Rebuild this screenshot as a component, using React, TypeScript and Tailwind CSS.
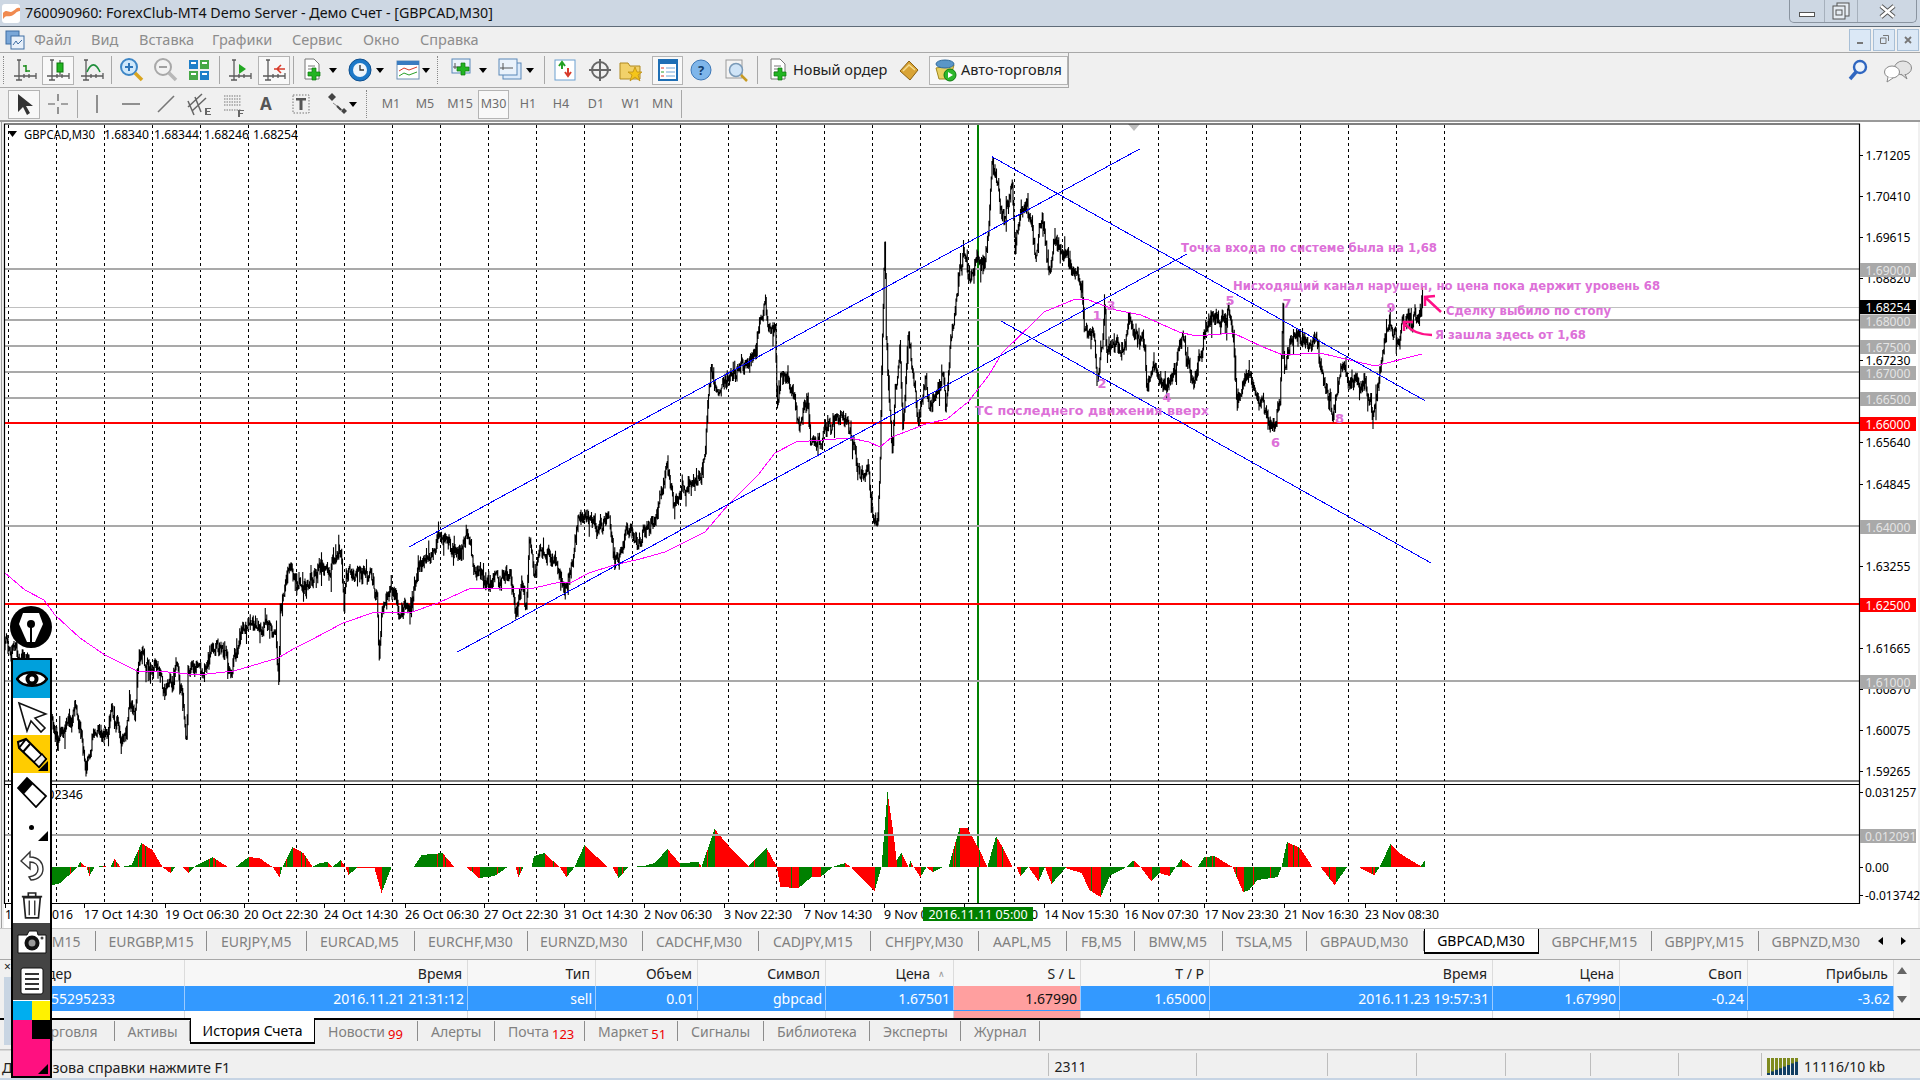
import React from "react";

type P = [number, number];
let seed = 12345;
const rnd = () => {
  seed = (seed * 1664525 + 1013904223) % 4294967296;
  return seed / 4294967296;
};
const interp = (pts: P[], x: number) => {
  for (let i = 1; i < pts.length; i++) {
    if (x <= pts[i][0]) {
      const [a, b] = pts[i - 1];
      const [c, d] = pts[i];
      return c === a ? d : b + ((d - b) * (x - a)) / (c - a);
    }
  }
  return pts[pts.length - 1][1];
};

const PRICE: P[] = [[5,647],[19,653],[30,665],[55,727],[57,747],[67,725],[76,707],[86,763],[95,728],[105,738],[111.5,713],[126,738],[130,700],[135,717],[139,647],[145,667],[158,670],[162,687],[172.5,687],[175.5,663],[181,693],[187,740],[188,670],[202,670],[210,653],[223,647],[231,670],[242,633],[248,625],[269,627],[276,640],[279,680],[280,607],[288,572],[295,577],[307,587],[320,567],[330,570],[341,547],[344,610],[346,570],[370,577],[377,600],[379,667],[382,613],[389,590],[400,607],[412,607],[417,573],[427,560],[438,540],[446,543],[461,553],[468,533],[473.5,563],[484,583],[501,580],[510,573],[515.6,617],[522,580],[526,610],[529,543],[534.5,573],[541,547],[555.6,563],[564,592],[572,567],[579,517],[589,520],[602,525],[608,513],[614.5,563],[627,533],[640,540],[657,517],[667,467],[674,503],[690.5,477],[699,483],[705,463],[707,413],[711.5,363],[716,393],[728,380],[741,367],[756,357],[758,333],[765,297],[768,330],[775.5,337],[777,400],[781,367],[791.5,393],[800,427],[808,400],[810.5,437],[821,440],[831.5,425],[844,413],[850,433],[861,480],[867,463],[871.5,510],[878,525],[880,470],[882,357],[885,237],[886,333],[892.5,463],[895,397],[900,353],[903,423],[908.5,333],[918,417],[926,380],[930,410],[943,377],[946,413],[951,337],[958,287],[964,253],[970,277],[977,260],[985,263],[989,220],[992,157],[998,190],[1004,220],[1012.5,183],[1015,250],[1019,220],[1027,200],[1035.6,257],[1042,213],[1049,277],[1054.6,240],[1065,250],[1073.5,267],[1082,287],[1084,327],[1094.5,333],[1097,380],[1103,340],[1105,300],[1106,347],[1124,350],[1129.5,320],[1145,343],[1147,387],[1155.6,363],[1166,387],[1174.5,373],[1181,337],[1193.5,383],[1204,333],[1210,317],[1227,320],[1228,302],[1232.6,323],[1237,407],[1250,377],[1258.7,407],[1273,420],[1274.7,433],[1280,397],[1283,307],[1284,370],[1292,337],[1309,343],[1317,340],[1322,370],[1327.5,397],[1332.7,420],[1340.6,367],[1351,383],[1367,387],[1373,412],[1380,377],[1385,333],[1389,318],[1397,343],[1403,323],[1414,317],[1420,320],[1423,295]];

const MA: P[] = [[5,573],[25,590],[44,600],[55,615],[80,638],[105,655],[137,671],[168,672],[198,675],[234,671],[278,658],[295,648],[311,640],[343,623],[375,612],[387,613],[412,612],[438,603],[471,588],[534,588],[560,582],[572,582],[589,573],[614,565],[640,559],[665,552],[705,532],[728,505],[758,475],[775,453],[796,442],[850,438],[869,442],[880,447],[892,437],[926,424],[947,419],[968,402],[989,375],[1002,353],[1036,320],[1044,312],[1073,300],[1086,299],[1116,310],[1141,315],[1179,332],[1196,336],[1233,333],[1263,347],[1283,355],[1320,353],[1375,366],[1422,354]];

const HIST: P[] = [[52,885],[60,883],[77,867],[79.5,862],[86,867],[89,876],[94,867],[102,866],[110,867],[114,859],[120,867],[131,865],[141,843],[152,850],[162,867],[170,873],[175,867],[182,867],[188,873],[196,865],[212,857],[227.5,867],[235,867],[248,857],[259,858],[272,867],[279,877],[282,867],[292,847],[303,853],[312,867],[319,863],[327,862],[332,867],[340,860],[345,867],[348,875],[356,868],[374,868],[381,893],[391,867],[413,867],[421,855],[442,853],[454,867],[466,867],[478.5,878],[494,876],[507,867],[515,867],[518,877],[523,867],[531,867],[533.5,856],[544,853],[559,867],[566,877],[574,867],[584,845],[607,867],[612,867],[618,878],[628,867],[643,866],[654,863],[667,849],[679,863],[698,862],[701,867],[714,829],[730,848],[748,866],[766,848],[776,866],[780,887],[798,888],[811,877],[820,877],[832,867],[844.5,863],[850.6,867],[861,878],[874,891],[881,867],[887,792],[893.5,837],[896,860],[901,853],[908,867],[910,861],[913,867],[920,877],[926,867],[932,872],[942.5,867],[948,867],[959,828],[967,828],[979,850],[987,867],[995.5,836],[1003.7,850],[1012,867],[1016,867],[1020,876],[1028,867],[1038,881],[1044.5,867],[1051,884],[1065,868],[1081,873],[1089,890],[1100,897],[1110,875],[1126,867],[1133.5,860],[1140,867],[1150.6,881],[1159,873],[1169,876],[1181,859],[1192,867],[1197,867],[1204,857],[1214,856],[1232,867],[1242.5,892],[1248.6,890],[1257,880],[1277,877],[1281,867],[1286.5,842],[1299.6,848],[1312,867],[1320,867],[1334,885],[1346.5,867],[1350,867],[1358,867],[1374,875],[1379,867],[1390,844],[1401.6,855],[1420,866],[1424,861]];

const buildPrice = () => {
  let d = "";
  let prev = PRICE[0][1];
  let n = 0;
  for (let x = 5; x <= 1423; x += 0.75) {
    n = 0.55 * n + (rnd() - 0.5) * 13;
    const base = interp(PRICE, x);
    const m = base + n;
    const hi = Math.max(157, Math.min(m, prev) - rnd() * 5 - (rnd() < 0.1 ? rnd() * 12 : 0));
    const lo = Math.max(m, prev) + rnd() * 5 + (rnd() < 0.1 ? rnd() * 12 : 0);
    d += `M${x.toFixed(2)} ${hi.toFixed(1)}V${lo.toFixed(1)}`;
    prev = m;
  }
  return d;
};
const priceD = buildPrice();
const maD = "M" + MA.map((p) => p.join(" ")).join("L");

const buildHist = () => {
  let g = "";
  let r = "";
  let prev = interp(HIST, 52);
  for (let x = 52; x <= 1424; x++) {
    const y = interp(HIST, x);
    let green = y < prev;
    if (Math.abs(y - 867) > 5 && rnd() < 0.06) green = !green;
    const seg = `M${x}.5 867V${y.toFixed(1)}`;
    if (Math.abs(y - 867) > 0.5) {
      if (green) g += seg;
      else r += seg;
    }
    prev = y;
  }
  return { g, r };
};
const hist = buildHist();

const GRID = [8,56,104,152,200,248,296,344,392,440,488,536,584,632,680,728,776,824,872,920,968,1014,1062,1110,1158,1206,1252,1300,1348,1396,1444];
const AXIS: [string, number][] = [["1.71205",155],["1.70410",196],["1.69615",237],["1.68820",278],["1.67230",360],["1.65640",442],["1.64845",484],["1.63255",566],["1.61665",648],["1.60870",689],["1.60075",730],["1.59265",771]];
const TAGS: [string, number, string][] = [["1.69000",270,"#a9a9a9"],["1.68000",321.5,"#a9a9a9"],["1.67500",347,"#a9a9a9"],["1.67000",373,"#a9a9a9"],["1.66500",399,"#a9a9a9"],["1.66000",424,"#ff0000"],["1.64000",527,"#a9a9a9"],["1.62500",605,"#ff0000"],["1.61000",682,"#a9a9a9"],["1.68254",307,"#000000"]];
const TIMES: [string, number][] = [["14 Oct 2016",5],["17 Oct 14:30",84],["19 Oct 06:30",165],["20 Oct 22:30",244],["24 Oct 14:30",324],["26 Oct 06:30",405],["27 Oct 22:30",484],["31 Oct 14:30",564],["2 Nov 06:30",644],["3 Nov 22:30",724],["7 Nov 14:30",804],["9 Nov 06:30",884],["11 Nov 00:30",964],["14 Nov 15:30",1044.5],["16 Nov 07:30",1124.5],["17 Nov 23:30",1204.5],["21 Nov 16:30",1284.5],["23 Nov 08:30",1365]];
const NOTES: [string, number, number, number][] = [
  ["Точка входа по системе была на 1,68",1181,248,256],
  ["Нисходящий канал нарушен, но цена пока держит уровень 68",1233,286,427],
  ["Сделку выбило по стопу",1446,311,165],
  ["Я зашла здесь от 1,68",1435,335,151],
  ["ТС последнего движения вверх",975,411,234],
];
const NUMS: [string, number, number][] = [["1",1097,315],["2",1102,383],["3",1111,305],["4",1167,397],["5",1230,300],["6",1275.5,442],["7",1287,303],["8",1339.5,418],["9",1391,307]];

function Chart() {
  return (
    <svg width="1920" height="806" viewBox="0 122 1920 806" className="block text-[12.5px]">
      <rect x="0" y="122" width="1920" height="806" fill="#ffffff" />
      <rect x="0" y="122" width="4" height="806" fill="#f0f0f0" />
      <rect x="1918" y="122" width="2" height="806" fill="#f0f0f0" />
      <path d="M1.5 122V928" stroke="#a0a0a0" strokeWidth="1" />
      {GRID.map((x) => (
        <g key={x}>
          <path d={`M${x}.5 125V781`} stroke="#000" strokeWidth="1" strokeDasharray="3 3" shapeRendering="crispEdges" />
          <path d={`M${x}.5 785V903`} stroke="#000" strokeWidth="1" strokeDasharray="3 3" shapeRendering="crispEdges" />
        </g>
      ))}
      <path d="M978 125V903" stroke="#008000" strokeWidth="2" />
      <g strokeWidth="2" shapeRendering="crispEdges">
        {[269, 320, 346, 372, 398, 526, 681, 835].map((y) => (
          <path key={y} d={`M5 ${y}H1859`} stroke="#a9a9a9" />
        ))}
        {[423, 604].map((y) => (
          <path key={y} d={`M5 ${y}H1859`} stroke="#ff0000" />
        ))}
      </g>
      <path d="M5 307.5H1859" stroke="#c0c0c0" strokeWidth="1" />
      <path d={hist.r} stroke="#ff0000" strokeWidth="1" shapeRendering="crispEdges" />
      <path d={hist.g} stroke="#008000" strokeWidth="1" shapeRendering="crispEdges" />
      <path d={`M5 835H1859`} stroke="#a9a9a9" strokeWidth="2" shapeRendering="crispEdges" />
      <path d={priceD} stroke="#000" strokeWidth="1.1" fill="none" />
      <path d={maD} stroke="#ff00ff" strokeWidth="1" fill="none" shapeRendering="crispEdges" />
      <g stroke="#0000ff" strokeWidth="1" fill="none" shapeRendering="crispEdges">
        <path d="M409 547L1139.6 149" />
        <path d="M457.5 652L1187 254" />
        <path d="M992 156.7L1425 400.7" />
        <path d="M1001 321L1431 563" />
      </g>
      <path d="M1128 124H1140L1134 131Z" fill="#bdbdbd" />
      <g fill="none" stroke="#ff0f87" strokeWidth="2.5">
        <path d="M1441 312L1426 298M1425 306L1425 297L1435 296" />
        <path d="M1432 335C1420 335 1412 332 1405 324M1404 331L1404 322L1413 322" />
      </g>
      {NOTES.map(([t, x, y, w]) => (
        <text key={t} x={x} y={y} fill="#dd70d8" fontWeight="700" dominantBaseline="central" textLength={w} lengthAdjust="spacingAndGlyphs" className="font-['DejaVu_Sans',sans-serif] text-[12px]">
          {t}
        </text>
      ))}
      {NUMS.map(([t, x, y]) => (
        <text key={t} x={x} y={y} fill="#dd70d8" fontWeight="700" textAnchor="middle" dominantBaseline="central" className="font-['DejaVu_Sans',sans-serif] text-[13px]">
          {t}
        </text>
      ))}
      <path d="M4.5 124H1859.5V903.5H4.5Z" fill="none" stroke="#000" strokeWidth="1.2" />
      <path d="M4.5 781H1859.5M4.5 784.5H1859.5" stroke="#000" strokeWidth="1.2" />
      <path d="M8 131H17L12.5 137Z" fill="#000" />
      <text x="24" y="134" fill="#000" dominantBaseline="central" textLength="71" lengthAdjust="spacingAndGlyphs">GBPCAD,M30</text>
      <text x="104" y="134" fill="#000" dominantBaseline="central" textLength="45" lengthAdjust="spacingAndGlyphs">1.68340</text>
      <text x="154" y="134" fill="#000" dominantBaseline="central" textLength="45" lengthAdjust="spacingAndGlyphs">1.68344</text>
      <text x="204" y="134" fill="#000" dominantBaseline="central" textLength="45" lengthAdjust="spacingAndGlyphs">1.68246</text>
      <text x="253" y="134" fill="#000" dominantBaseline="central" textLength="45" lengthAdjust="spacingAndGlyphs">1.68254</text>
      <text x="83" y="794" fill="#000" textAnchor="end" dominantBaseline="central">0.002346</text>
      {AXIS.map(([t, y]) => (
        <g key={t}>
          <path d={`M1859 ${y}.5H1863`} stroke="#000" strokeWidth="1" />
          <text x="1865.5" y={y + 0.5} fill="#000" dominantBaseline="central" textLength="45" lengthAdjust="spacingAndGlyphs">{t}</text>
        </g>
      ))}
      {TAGS.map(([t, y, c]) => (
        <g key={t}>
          <rect x="1860" y={y - 7} width="56" height="14" fill={c} />
          <text x="1865.5" y={y} fill={c === "#a9a9a9" ? "#e4e4e4" : "#ffffff"} dominantBaseline="central" textLength="45" lengthAdjust="spacingAndGlyphs">{t}</text>
        </g>
      ))}
      {([["0.031257",792],["0.00",867],["-0.013742",895]] as [string, number][]).map(([t, y]) => (
        <g key={t}>
          <path d={`M1859 ${y}.5H1863`} stroke="#000" strokeWidth="1" />
          <text x="1865" y={y} fill="#000" dominantBaseline="central" className="text-[12px]">{t}</text>
        </g>
      ))}
      <rect x="1860" y="829" width="56" height="14" fill="#a9a9a9" />
      <text x="1865" y="836" fill="#e4e4e4" dominantBaseline="central" className="text-[12px]">0.012091</text>
      {TIMES.map(([t, x]) => (
        <g key={t}>
          <path d={`M${Math.floor(x) + 0.5} 903V908`} stroke="#000" strokeWidth="1" />
          <text x={x} y="914" fill="#000" dominantBaseline="central" textLength={t.length === 12 ? 74 : 68} lengthAdjust="spacingAndGlyphs">{t}</text>
        </g>
      ))}
      <rect x="923" y="907" width="110" height="14" fill="#008000" />
      <text x="978" y="914" fill="#fff" textAnchor="middle" dominantBaseline="central">2016.11.11 05:00</text>
    </svg>
  );
}

const Ax = () => (
  <path d="M7 3V23M2 19H24M7 3H5M7 3H9M4 23H10M24 16V22M12 17V21M17 17V21" stroke="#5a5a5a" strokeWidth="1.3" fill="none" />
);
const S = ({ children, w = 26, h = 26, vb = "0 0 26 26" }: { children: React.ReactNode; w?: number; h?: number; vb?: string }) => (
  <svg width={w} height={h} viewBox={vb} fill="none" className="block shrink-0">
    {children}
  </svg>
);
const Plus = ({ x = 14, y = 14 }: { x?: number; y?: number }) => (
  <path d={`M${x + 4} ${y}h4v4h4v4h-4v4h-4v-4h-4v-4h4z`} fill="#22b422" stroke="#0b7a0b" strokeWidth="0.7" />
);
const Glass = ({ gray }: { gray?: boolean }) => (
  <>
    <circle cx="11" cy="10" r="8" fill={gray ? "#f2f2f2" : "#cfe8fb"} stroke={gray ? "#a8a8a8" : "#3d86c6"} strokeWidth="2" />
    <path d="M17 16L24 23" stroke={gray ? "#b8b8b8" : "#d9a520"} strokeWidth="3.5" />
  </>
);

function Btn({ className, active, children }: { className: string; active?: boolean; children: React.ReactNode }) {
  return (
    <div className={`${className} h-[29px] shrink-0 flex items-center justify-center ${active ? "bg-[#f8f8f8] border border-[#b4b4b4]" : ""}`}>
      {children}
    </div>
  );
}
const Sep = ({ className = "" }: { className?: string }) => <div className={`${className} w-[2px] h-[28px] shrink-0 border-r border-[#a8a8a8]`} />;
const Grip = ({ className }: { className: string }) => (
  <div className={`${className} h-[28px] shrink-0 flex justify-center`}>
    <div className="w-[2px] h-[28px] border-l border-dotted border-[#888]" />
  </div>
);
const Arr = ({ className = "" }: { className?: string }) => (
  <svg width="8" height="5" viewBox="0 0 8 5" className={`${className} block shrink-0`}>
    <path d="M0 0H8L4 5Z" fill="#000" />
  </svg>
);

function Toolbar1() {
  return (
    <div className="w-[1069px] h-[35px] flex items-center border-r border-b border-[#a8a8a8] bg-[#f0f0f0]">
      <Grip className="w-[8px]" />
      <Btn className="w-[33px]"><S><Ax /><path d="M14 8V15M14 9H11M14 14H18" stroke="#1a8c1a" strokeWidth="1.5" /></S></Btn>
      <Btn className="ml-[1px] w-[32px]" active><S><Ax /><path d="M15 3V18" stroke="#333" /><rect x="12" y="6" width="6" height="9" fill="#22b422" stroke="#0b7a0b" /></S></Btn>
      <Btn className="w-[36px]"><S><Ax /><path d="M8 15C12 5 17 6 21 15" stroke="#1f8f3c" strokeWidth="1.6" /></S></Btn>
      <Sep />
      <Btn className="w-[38px]"><S><Glass /><path d="M11 6V14M7 10H15" stroke="#2d74b8" strokeWidth="2" /></S></Btn>
      <Btn className="w-[30px]"><S><Glass gray /><path d="M7 10H15" stroke="#a0a0a0" strokeWidth="2" /></S></Btn>
      <Btn className="w-[38px]"><S><rect x="3" y="3" width="9" height="9" fill="#1f7fc9" /><rect x="14" y="3" width="9" height="9" fill="#46a846" /><rect x="3" y="14" width="9" height="9" fill="#46a846" /><rect x="14" y="14" width="9" height="9" fill="#1f7fc9" /><path d="M5 6H10M16 6H21M5 17H10M16 17H21" stroke="#fff" strokeWidth="2" /></S></Btn>
      <Sep />
      <Btn className="ml-[2px] w-[36px]"><S><Ax /><path d="M12 7L19 12L12 17Z" fill="#22a822" /></S></Btn>
      <Btn className="w-[32px]" active><S><Ax /><path d="M13 12H24M20 8L16 12L20 16" stroke="#d83a2a" strokeWidth="1.6" /></S></Btn>
      <Sep className="ml-[2px]" />
      <div className="pl-[3px] flex items-center shrink-0"><Btn className="w-[32px]"><S><path d="M5 2H14L19 7V22H5Z" fill="#fff" stroke="#777" /><path d="M8 9H15M8 12H13" stroke="#777" /><Plus x={8} y={11} /></S></Btn><Arr /></div>
      <div className="pl-[7px] flex items-center shrink-0"><Btn className="w-[32px]"><S><circle cx="13" cy="13" r="11" fill="#1c78c8" stroke="#0e4f8e" /><circle cx="13" cy="13" r="7" fill="#eef4fa" /><path d="M13 8V13H17" stroke="#333" strokeWidth="1.3" /></S></Btn><Arr /></div>
      <div className="pl-[10px] flex items-center shrink-0"><Btn className="w-[28px]"><S><rect x="2" y="4" width="22" height="18" fill="#fff" stroke="#6a8fb5" /><rect x="2" y="4" width="22" height="4" fill="#3a7cc0" /><path d="M4 14L9 11L14 13L22 10" stroke="#d83a2a" /><path d="M4 19L9 16L14 18L22 15" stroke="#2aa02a" /></S></Btn><Arr /></div>
      <Grip className="w-[16px]" />
      <div className="pl-[3px] flex items-center shrink-0"><Btn className="w-[28px]"><S><rect x="2" y="2" width="18" height="14" fill="#eaf2fb" stroke="#5b88b8" /><path d="M5 6V12M3 10H12" stroke="#555" /><Plus x={7} y={6} /></S></Btn><Arr className="ml-[2px]" /></div>
      <div className="pl-[9px] flex items-center shrink-0"><Btn className="w-[28px]"><S><rect x="6" y="6" width="18" height="16" fill="#dceafa" stroke="#5b88b8" /><rect x="2" y="2" width="18" height="16" fill="#eaf2fb" stroke="#5b88b8" /><path d="M6 6V13M3 11H16" stroke="#555" /></S></Btn><Arr className="ml-[2px]" /></div>
      <Sep className="ml-[9px]" />
      <Btn className="w-[40px]"><S><rect x="3" y="3" width="20" height="20" fill="#fff" stroke="#6a9fd0" /><path d="M10 6V12M7 9L10 5L13 9" stroke="#22a022" strokeWidth="2" /><path d="M16 11V18M13 15L16 19L19 15" stroke="#d83a2a" strokeWidth="2" /></S></Btn>
      <Btn className="w-[30px]"><S><circle cx="13" cy="13" r="8" stroke="#666" strokeWidth="2" /><path d="M13 2V24M2 13H24" stroke="#666" strokeWidth="2" /></S></Btn>
      <Btn className="w-[32px]"><S><path d="M2 6H10L12 9H22V22H2Z" fill="#f2d16a" stroke="#b08a20" /><path d="M17 10L19 15H24L20 18L22 24L17 20L12 24L14 18L10 15H15Z" fill="#f5c518" stroke="#b8860b" strokeWidth="0.7" /></S></Btn>
      <Btn className="ml-[5px] w-[31px]" active><S><rect x="4" y="3" width="18" height="20" fill="#fff" stroke="#1f6fb5" strokeWidth="2" /><path d="M4 4H22V7H4Z" fill="#1f6fb5" /><path d="M11 11H20M11 15H20M11 19H20" stroke="#6ea6d8" /><path d="M6 11H9" stroke="#d83a2a" /><path d="M6 15H9" stroke="#2aa02a" /><path d="M6 19H9" stroke="#d83a2a" /></S></Btn>
      <Btn className="w-[36px]"><S><circle cx="13" cy="13" r="10" fill="#7fb6ea" stroke="#3c78b8" /><text x="13" y="18" textAnchor="middle" fill="#123e6e" fontWeight="700" className="text-[13px]">?</text></S></Btn>
      <Btn className="w-[34px]"><S><rect x="3" y="3" width="16" height="18" fill="#f4f4f4" stroke="#999" /><circle cx="13" cy="13" r="6.5" fill="#cfe4f7" stroke="#7a9ab8" strokeWidth="1.5" /><path d="M18 18L24 24" stroke="#c79a22" strokeWidth="2.5" /></S></Btn>
      <Sep className="ml-[3px]" />
      <div className="w-[35px] h-[29px] shrink-0 pl-[8px] flex items-center"><S><path d="M5 2H14L19 7V22H5Z" fill="#fff" stroke="#777" /><path d="M8 9H15M8 12H15M8 15H12" stroke="#777" /><Plus x={8} y={11} /></S></div>
      <div className="w-[95px] shrink-0 text-[14.5px] text-[#222] whitespace-nowrap">Новый ордер</div>
      <Btn className="w-[41px]"><S><path d="M4 14L13 4L22 13L14 23Z" fill="#d9a436" stroke="#8a6112" /><path d="M7 14L13 8L19 13" stroke="#f6dc8e" strokeWidth="1.5" /></S></Btn>
      <Btn className="w-[139px] !justify-start pl-[2px] gap-[3px]" active>
        <S><path d="M4 11L22 8L18 22H7Z" fill="#e8d060" stroke="#a08820" /><ellipse cx="13" cy="7" rx="9" ry="4" fill="#5a96c8" stroke="#2f6a9c" /><circle cx="18" cy="18" r="6" fill="#2cb82c" stroke="#0f7a0f" /><path d="M16 15L21 18L16 21Z" fill="#fff" /></S>
        <span className="text-[14.5px] text-[#222] whitespace-nowrap">Авто-торговля</span>
      </Btn>
    </div>
  );
}

const Tf = ({ className, active, children }: { className: string; active?: boolean; children: React.ReactNode }) => (
  <Btn className={className} active={active}>
    <span className="text-[12.5px] text-[#6e6e6e]">{children}</span>
  </Btn>
);

function Toolbar2() {
  return (
    <div className="h-[32px] flex items-center bg-[#f0f0f0] pl-[8px]">
      <Btn className="w-[32px]" active><S><path d="M7 3V21L12 16L16 24L19 22L15 15H22Z" fill="#333" /></S></Btn>
      <Btn className="w-[36px]"><S><path d="M13 3V10M13 16V23M3 13H10M16 13H23" stroke="#555" strokeWidth="1.2" /></S></Btn>
      <Sep />
      <Btn className="w-[38px]"><S><path d="M13 4V22" stroke="#777" strokeWidth="1.6" /></S></Btn>
      <Btn className="w-[30px]"><S><path d="M4 13H22" stroke="#777" strokeWidth="1.6" /></S></Btn>
      <Btn className="w-[39px]"><S><path d="M5 21L21 5" stroke="#777" strokeWidth="1.6" /></S></Btn>
      <Btn className="w-[28px]"><S><path d="M2 16L16 3M6 20L20 7M2 10L8 24M9 6L15 21" stroke="#666" strokeWidth="1.5" /><path d="M19 17H25V18H21V20H24V21H21V23H25V24H19Z" fill="#666" /></S></Btn>
      <Btn className="w-[42px]"><S><path d="M3 5H20M3 8H20M3 11H20M3 14H20M3 19H20" stroke="#777" strokeDasharray="1.5 1" /><path d="M17 19H23V20H19V22H22V23H19V26H17Z" fill="#666" /></S></Btn>
      <Btn className="w-[22px]"><span className="text-[17px] font-bold text-[#555]">A</span></Btn>
      <Btn className="w-[48px]"><S><rect x="5" y="4" width="16" height="18" stroke="#777" strokeDasharray="1.5 1.5" /><path d="M8 7H18V9.5H14.5V19H11.5V9.5H8Z" fill="#555" /></S></Btn>
      <Btn className="w-[22px]"><S><path d="M5 6L9 2L13 6L9 10Z" fill="#444" /><path d="M10 12L22 21" stroke="#888" /><path d="M14 15L18 19" stroke="#444" strokeWidth="2" /><path d="M18 20L21 17L24 20L21 23Z" fill="#444" /></S></Btn>
      <Arr className="ml-[2px]" />
      <Grip className="w-[19px]" />
      <Tf className="w-[30px]">M1</Tf>
      <Tf className="w-[38px]">M5</Tf>
      <Tf className="w-[32px]">M15</Tf>
      <Tf className="ml-[2px] w-[31px]" active>M30</Tf>
      <Tf className="w-[38px]">H1</Tf>
      <Tf className="w-[28px]">H4</Tf>
      <Tf className="w-[42px]">D1</Tf>
      <Tf className="w-[28px]">W1</Tf>
      <Tf className="w-[35px]">MN</Tf>
      <Sep />
    </div>
  );
}

const MdiBtn = ({ children }: { children: React.ReactNode }) => (
  <div className="w-[22px] h-[22px] bg-[#dbe8f6] border border-[#a8bfd6] flex items-center justify-center">{children}</div>
);

function TitleBar() {
  return (
    <div className="h-[27px] bg-[#cdd7e3] border-b border-[#5f6b78] flex items-center relative shrink-0">
      <div className="ml-[2px] w-[18px] h-[19px] bg-white rounded-[3px] flex items-center justify-center">
        <S w={17} h={14} vb="0 0 17 14"><path d="M0 7C4 2 6 8 10 5S14 1 17 2V5C13 5 12 9 8 10S3 9 0 13Z" fill="#f08a50" /></S>
      </div>
      <div className="ml-[5px] text-[14.25px] text-[#111] whitespace-nowrap">760090960: ForexClub-MT4 Demo Server - Демо Счет - [GBPCAD,M30]</div>
      <div className="ml-auto mr-[3px] self-start w-[128px] h-[23px] border border-t-0 border-[#8a94a0] rounded-b-[5px] flex">
        <div className="w-[35px] border-r border-[#a6b0bc] flex items-end justify-center pb-[5px]">
          <div className="w-[16px] h-[5px] bg-white border border-[#555]" />
        </div>
        <div className="w-[33px] border-r border-[#a6b0bc] flex items-center justify-center">
          <S w={18} h={18} vb="0 0 18 18"><rect x="5" y="1" width="12" height="13" fill="#e6ecf3" stroke="#555" /><rect x="1" y="4" width="12" height="13" fill="#e6ecf3" stroke="#555" /><rect x="4" y="8" width="6" height="5" stroke="#555" /></S>
        </div>
        <div className="flex-1 flex items-center justify-center">
          <S w={17} h={15} vb="0 0 17 15"><path d="M2 2L15 13M15 2L2 13" stroke="#555" strokeWidth="4.5" /><path d="M2 2L15 13M15 2L2 13" stroke="#fff" strokeWidth="2.6" /></S>
        </div>
      </div>
    </div>
  );
}

function MenuBar() {
  const items: [string, string][] = [["Файл","w-[57px]"],["Вид","w-[48px]"],["Вставка","w-[73px]"],["Графики","w-[80px]"],["Сервис","w-[71px]"],["Окно","w-[57px]"],["Справка","w-[80px]"]];
  return (
    <div className="h-[26px] bg-[#f0f0f0] border-b border-[#a8a8a8] flex items-center shrink-0">
      <div className="w-[34px] pl-[5px] shrink-0">
        <S w={20} h={20} vb="0 0 20 20"><rect x="1" y="1" width="13" height="13" fill="#7aa7d8" stroke="#3f6ea3" /><rect x="6" y="6" width="13" height="13" fill="#e8f0fa" stroke="#3f6ea3" /><path d="M8 15L11 11L13 14L17 10" stroke="#3f6ea3" /></S>
      </div>
      {items.map(([t, w]) => (
        <div key={t} className={`${w} shrink-0 text-[14.5px] text-[#8c8c8c]`}>{t}</div>
      ))}
      <div className="ml-auto flex gap-[2px] mr-[1px]">
        <MdiBtn><div className="w-[6px] h-[2px] bg-[#777] mt-[6px]" /></MdiBtn>
        <MdiBtn><S w={9} h={9} vb="0 0 9 9"><path d="M3 .5H8.5V6M.5 3H6V8.5H.5Z" stroke="#777" /></S></MdiBtn>
        <MdiBtn><S w={8} h={8} vb="0 0 8 8"><path d="M1 1L7 7M7 1L1 7" stroke="#777" strokeWidth="1.8" /></S></MdiBtn>
      </div>
    </div>
  );
}

const TopTab = ({ className, active, children }: { className: string; active?: boolean; children: React.ReactNode }) => (
  <div className={`${className} shrink-0 whitespace-nowrap overflow-hidden ${active ? "h-[25px] bg-white border-x border-b-2 border-black text-black flex items-center justify-center" : "h-[20px] mt-[2px] border-r border-[#8c8c8c] text-[#808080] flex items-center"}`}>
    {children}
  </div>
);

function SymbolTabs() {
  const rows: [string, string][] = [
    ["EURGBP,M15","w-[111.5px] pl-[13px]"],["EURJPY,M5","w-[100px] pl-[14px]"],["EURCAD,M5","w-[108px] pl-[13px]"],["EURCHF,M30","w-[113px] pl-[13px]"],["EURNZD,M30","w-[115px] pl-[12px]"],["CADCHF,M30","w-[116px] pl-[13px]"],["CADJPY,M15","w-[112px] pl-[14px]"],["CHFJPY,M30","w-[108px] pl-[14px]"],["AAPL,M5","w-[88px] pl-[14px]"],["FB,M5","w-[67.5px] pl-[14px]"],["BMW,M5","w-[88.5px] pl-[14px]"],["TSLA,M5","w-[84px] pl-[13px]"],["GBPAUD,M30","w-[116.5px] pl-[13px]"],
  ];
  return (
    <div className="h-[31px] bg-[#f0f0f0] border-t border-[#c8c8c8] flex items-start text-[14px] shrink-0">
      <TopTab className="w-[95.5px] justify-end pr-[14px]">M15</TopTab>
      {rows.map(([t, c]) => (
        <TopTab key={t} className={c}>{t}</TopTab>
      ))}
      <TopTab className="w-[115px]" active>GBPCAD,M30</TopTab>
      <TopTab className="w-[113px] pl-[13px]">GBPCHF,M15</TopTab>
      <TopTab className="w-[107px] pl-[13px]">GBPJPY,M15</TopTab>
      <div className="w-[110px] pl-[13px] h-[20px] mt-[2px] text-[#808080] whitespace-nowrap flex items-center shrink-0">GBPNZD,M30</div>
      <div className="flex items-center gap-[18px] h-[20px] mt-[2px] ml-[9px]">
        <div className="w-0 h-0 border-y-[4px] border-y-transparent border-r-[5px] border-r-black" />
        <div className="w-0 h-0 border-y-[4px] border-y-transparent border-l-[5px] border-l-black" />
      </div>
    </div>
  );
}

const COLS = ["w-[172px]","w-[283px]","w-[128px]","w-[102px]","w-[128px]","w-[128px]","w-[127px]","w-[129px]","w-[283px]","w-[127px]","w-[128px]","w-[146px]"];
const HEAD = ["Ордер","Время","Тип","Объем","Символ","Цена","S / L","T / P","Время","Цена","Своп","Прибыль"];
const ROW = ["55295233","2016.11.21 21:31:12","sell","0.01","gbpcad","1.67501","1.67990","1.65000","2016.11.23 19:57:31","1.67990","-0.24","-3.62"];

function Terminal() {
  return (
    <div className="h-[59px] flex bg-white text-[14px] border-t border-[#a8a8a8] shrink-0">
      <div className="w-[13px] bg-[#f0f0f0] shrink-0 pl-[4px] text-[12px] leading-[12px] pt-[1px] text-[#222]">×</div>
      <div className="flex flex-col">
        <div className="flex h-[26px] bg-[#f7f7f7]">
          {HEAD.map((h, i) => (
            <div key={i} className={`${COLS[i]} shrink-0 h-full border-r border-[#dcdcdc] flex items-center pt-[1px] text-[#222] ${i === 0 ? "pl-[15px]" : i === 5 ? "justify-end pr-[24px]" : "justify-end pr-[5px]"}`}>
              {h}
              {i === 5 && <span className="ml-[8px] -mr-[16px] text-[9px] text-[#999]">∧</span>}
            </div>
          ))}
        </div>
        <div className="flex h-[26px] bg-[#3399ff] border-b border-[#3399ff]">
          {ROW.map((c, i) => (
            <div key={i} className={`${COLS[i]} shrink-0 h-full border-r border-[#9ccbff] flex items-center pt-[2px] ${i === 6 ? "bg-[#ff9f9f] text-[#111]" : "text-white"} ${i === 0 ? "pl-[38px]" : "justify-end pr-[3px]"}`}>
              {c}
            </div>
          ))}
        </div>
        <div className="flex h-[7px] bg-white">
          {ROW.map((c, i) => (
            <div key={i} className={`${COLS[i]} shrink-0 h-full border-r border-[#d8d8d8] ${i === 6 ? "bg-[#ff9f9f]" : ""}`} />
          ))}
        </div>
      </div>
      <div className="w-[16px] shrink-0 bg-[#f4f4f4] flex flex-col items-center justify-between py-[7px]">
        <div className="w-0 h-0 border-x-[5px] border-x-transparent border-b-[7px] border-b-[#666]" />
        <div className="w-0 h-0 border-x-[5px] border-x-transparent border-t-[7px] border-t-[#666] mb-[8px]" />
      </div>
      <div className="flex-1 bg-[#f0f0f0]" />
    </div>
  );
}

const BotTab = ({ className, sup, children }: { className: string; sup?: string; children: React.ReactNode }) => (
  <div className={`${className} h-[20px] mt-[1px] shrink-0 pl-[13px] border-r border-[#8c8c8c] flex items-center text-[#808080] whitespace-nowrap`}>
    {children}
    {sup && <span className="ml-[3px] text-[13px] text-[#ee0000] translate-y-[4px]">{sup}</span>}
  </div>
);

function BottomTabs() {
  return (
    <div className="h-[32px] bg-[#f0f0f0] border-t-2 border-black border-b border-b-[#c0c0c0] flex items-start text-[14px] shrink-0">
      <BotTab className="w-[114.5px] pl-[35px]">Торговля</BotTab>
      <BotTab className="w-[75.5px]">Активы</BotTab>
      <div className="w-[125px] h-[26px] -mt-[2px] bg-white border-x border-b-2 border-black text-black flex items-center justify-center shrink-0 whitespace-nowrap">История Счета</div>
      <BotTab className="w-[103px]" sup="99">Новости</BotTab>
      <BotTab className="w-[77px]">Алерты</BotTab>
      <BotTab className="w-[90px]" sup="123">Почта</BotTab>
      <BotTab className="w-[93px]" sup="51">Маркет</BotTab>
      <BotTab className="w-[86px]">Сигналы</BotTab>
      <BotTab className="w-[106px]">Библиотека</BotTab>
      <BotTab className="w-[91px]">Эксперты</BotTab>
      <BotTab className="w-[79px]">Журнал</BotTab>
    </div>
  );
}

const BARS = [0, 1, 2, 3, 4, 5, 6, 7];
function Status() {
  const w = ["w-[148.5px]","w-[131px]","w-[89px]","w-[89px]","w-[85px]","w-[88px]","w-[83px]"];
  return (
    <div className="h-[28px] bg-[#f0f0f0] flex items-stretch text-[14px] text-[#222] shrink-0 border-t border-[#d8d8d8]">
      <div className="w-[1047.5px] pl-[2px] pt-[6px] flex items-center whitespace-nowrap shrink-0 text-[14.4px]">Для вызова справки нажмите F1</div>
      {w.map((c, i) => (
        <div key={i} className={`${c} shrink-0 border-l border-[#bdbdbd] flex items-center pl-[6px] pt-[4px] my-[2px]`}>{i === 0 ? "2311" : ""}</div>
      ))}
      <div className="flex-1 border-l border-[#bdbdbd] my-[2px] flex items-center pl-[5px] pt-[4px] gap-[5px] whitespace-nowrap">
        <S w={32} h={17} vb="0 0 32 17">
          {BARS.map((i) => (
            <g key={i}>
              <rect x={i * 4} y="0" width="3" height="17" fill="#7e8a1e" />
              <rect x={i * 4} y={15 - i * 1.6} width="3" height={2 + i * 1.6} fill="#123f63" />
            </g>
          ))}
        </S>
        <span>11116/10 kb</span>
      </div>
    </div>
  );
}

function Palette() {
  const tri = <div className="absolute right-[2px] bottom-[2px] w-0 h-0 border-l-[10px] border-l-transparent border-b-[10px] border-b-black" />;
  return (
    <>
      <div className="absolute left-[10px] top-[606px] w-[42px] h-[42px]">
        <S w={42} h={42} vb="0 0 42 42">
          <circle cx="21" cy="21" r="21" fill="#000" />
          <path d="M13 7H29L33 18L25 36H17L9 18Z" fill="#fff" />
          <circle cx="21" cy="18" r="4" fill="#000" />
          <path d="M21 18V36" stroke="#000" strokeWidth="2" />
        </S>
      </div>
      <div className="absolute left-[11px] top-[658px] w-[41px] h-[420px] border-2 border-black bg-white flex flex-col">
        <div className="h-[38px] bg-[#00a0dc] flex items-center justify-center shrink-0">
          <S w={32} h={22} vb="0 0 32 22"><path d="M1 11C7 2 25 2 31 11C25 20 7 20 1 11Z" fill="#fff" stroke="#000" strokeWidth="2.5" /><circle cx="16" cy="11" r="6.5" fill="#000" /><circle cx="16" cy="11" r="2.5" fill="#fff" /></S>
        </div>
        <div className="h-[37px] flex items-center justify-center shrink-0">
          <S w={32} h={32} vb="0 0 32 32"><path d="M3 2L30 13L19 17L29 27L25 31L15 20L11 30Z" fill="#fff" stroke="#111" strokeWidth="1.6" /></S>
        </div>
        <div className="h-[38px] bg-[#ffcc00] flex items-center justify-center shrink-0 relative">
          <S w={34} h={34} vb="0 0 34 34"><path d="M3 5L11 2L31 22L24 30L4 11Z" fill="#fff" stroke="#000" strokeWidth="2" /><path d="M4 11L11 2M8 15L15 7" stroke="#000" strokeWidth="2" /><path d="M24 30L31 22L27 17L19 25Z" fill="#eee" stroke="#000" strokeWidth="1.4" /></S>
          {tri}
        </div>
        <div className="h-[38px] flex items-center justify-center shrink-0">
          <S w={32} h={32} vb="0 0 32 32"><path d="M2 12L11 2L30 20L20 31Z" fill="#fff" stroke="#000" strokeWidth="1.8" /><path d="M2 12L11 2L17 8L8 18Z" fill="#000" /></S>
        </div>
        <div className="h-[32px] flex items-center justify-center shrink-0 relative">
          <div className="w-[5px] h-[5px] rounded-full bg-black" />
          {tri}
        </div>
        <div className="h-[40px] pt-[6px] flex items-center justify-center shrink-0">
          <S w={26} h={32} vb="0 0 26 32"><path d="M2 11L11 2V7C20 7 24 13 24 19C24 25 19 30 12 30L10 27C16 26 19 23 19 19C19 15 16 12 11 12V19Z" fill="#fff" stroke="#333" strokeWidth="1.4" /></S>
        </div>
        <div className="h-[40px] shrink-0 pt-[3px] flex items-center justify-center">
          <S w={24} h={28} vb="0 0 26 30"><path d="M2 6H24M9 6V2H17V6" stroke="#222" strokeWidth="1.8" /><path d="M4 7L6 29H20L22 7Z" fill="#fff" stroke="#222" strokeWidth="1.8" /><path d="M10 10V26M16 10V26" stroke="#222" strokeWidth="1.4" /></S>
        </div>
        <div className="h-[77px] bg-[#444444] shrink-0 flex flex-col items-center">
          <div className="h-[38px] flex items-center justify-center">
            <S w={30} h={24} vb="0 0 30 24"><path d="M1 5H10L12 1H20L21 5H29V23H1Z" fill="#fff" stroke="#111" /><circle cx="15" cy="13" r="7.5" fill="#111" /><circle cx="15" cy="13" r="3.5" fill="#999" /><circle cx="25" cy="8" r="1.5" fill="#444" /></S>
          </div>
          <div className="h-[39px] flex items-center justify-center">
            <S w={24} h={28} vb="0 0 24 28"><rect x="1" y="1" width="22" height="26" rx="2" fill="#fff" stroke="#111" /><path d="M5 7H19M5 12H19M5 17H19M5 22H19" stroke="#333" strokeWidth="2" /></S>
          </div>
        </div>
        <div className="flex-1 relative bg-[#ff1080] flex flex-wrap content-start border-t border-white">
          <div className="w-1/2 h-[19px] bg-[#00aeef]" />
          <div className="w-1/2 h-[19px] bg-[#fff200]" />
          <div className="w-1/2 h-[19px]" />
          <div className="w-1/2 h-[19px] bg-black" />
          {tri}
        </div>
      </div>
    </>
  );
}

export default function App() {
  return (
    <div className="relative w-[1920px] h-[1080px] overflow-hidden bg-[#f0f0f0] flex flex-col font-['Noto_Sans',sans-serif]">
      <TitleBar />
      <MenuBar />
      <div className="relative shrink-0">
        <Toolbar1 />
        <Toolbar2 />
        <div className="absolute right-[51px] top-[6px]">
          <S w={22} h={24} vb="0 0 22 24"><circle cx="13" cy="8" r="6" fill="#eef4fb" stroke="#2f66c0" strokeWidth="2.4" /><path d="M9 13L3 20" stroke="#2f66c0" strokeWidth="3.5" /></S>
        </div>
        <div className="absolute right-[7px] top-[6px]">
          <S w={30} h={24} vb="0 0 30 24"><ellipse cx="20" cy="9" rx="8.5" ry="7" fill="#e4e4e4" stroke="#888" /><path d="M22 15L24 20L18 15" fill="#ddd" stroke="#888" /><ellipse cx="9" cy="13" rx="7.5" ry="6" fill="#fff" stroke="#888" /><path d="M5 18L4 23L10 19" fill="#fff" stroke="#888" /></S>
        </div>
      </div>
      <div className="h-[2px] bg-[#9a9a9a] shrink-0" />
      <Chart />
      <SymbolTabs />
      <Terminal />
      <BottomTabs />
      <Status />
      <div className="h-[2px] bg-[#c6d4e4] shrink-0" />
      <div className="absolute left-[4px] top-[977px] w-[8px] h-[68px] bg-[#c8d5e3]" />
      <Palette />
    </div>
  );
}
